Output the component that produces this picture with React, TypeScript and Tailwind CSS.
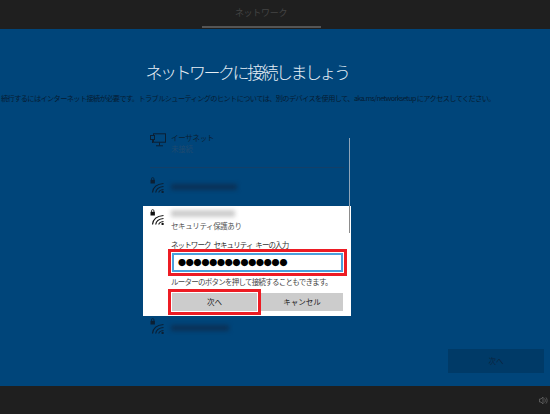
const jp = "font-['Noto_Sans_CJK_JP','Noto_Sans',sans-serif]";

function WifiIcon({ dark = false }: { dark?: boolean }) {
  const c = dark ? '#0b1f33' : '#111111';
  return (
    <svg width="16" height="16" viewBox="0 0 16 16" fill="none" className="shrink-0">
      <rect x="0.5" y="2.8" width="4.4" height="3.7" fill={c} />
      <path d="M1.5 3V1.8a1.2 1.2 0 0 1 2.4 0V3" stroke={c} strokeWidth="0.8" />
      <path d="M2.5 15.5C3 10.5 7 7 13.5 6.5" stroke={c} strokeWidth="1.2" />
      <path d="M5.7 15.5C6.1 12.4 8.6 10 13.5 9.5" stroke={c} strokeWidth="1.2" />
      <path d="M8.8 15.5C9 14 10.6 12.8 13.5 12.5" stroke={c} strokeWidth="1.2" />
      <circle cx="12.6" cy="14.9" r="1.2" fill={c} />
    </svg>
  );
}

function EthernetIcon() {
  return (
    <svg width="16" height="14" viewBox="0 0 16 14" fill="none" className="shrink-0">
      <rect x="3.5" y="0.8" width="12" height="8.4" stroke="#0b1f33" strokeWidth="1" />
      <rect x="0.5" y="2.5" width="4" height="4" fill="#00457a" stroke="#0b1f33" strokeWidth="1" />
      <path d="M2.5 6.5V10M9.5 9.5V12.5M6 12.8H13" stroke="#0b1f33" strokeWidth="1" />
    </svg>
  );
}

export default function App() {
  return (
    <div className={`${jp} flex h-[414px] w-[550px] flex-col overflow-hidden bg-[#00457a]`}>
      <header className="flex h-[29px] shrink-0 flex-col items-center bg-[#1f1f1f] pr-[28px]">
        <div className="flex h-[28px] w-[119px] items-center justify-center border-b-2 border-[#555555] text-[9px] tracking-[-0.3px] text-[#444444]">
          ネットワーク
        </div>
      </header>

      <main className="flex flex-1 flex-col items-center pr-[56px]">
        <h1 className="mt-[30px] h-[26px] text-[17px] font-light leading-[26px] tracking-[-2.5px] text-[#e6eef5]">
          ネットワークに接続しましょう
        </h1>
        <p className="mt-[7px] w-[550px] self-start whitespace-nowrap pl-[1px] text-[7.2px] leading-[12px] tracking-[-0.61px] text-[#061c32]">
          続行するにはインターネット接続が必要です。トラブルシューティングのヒントについては、別のデバイスを使用して、aka.ms/networksetup にアクセスしてください。
        </p>

        <div className="relative mt-[26px] w-[208px]">
          <div className="absolute right-[1px] top-[8px] h-[95px] w-[1px] bg-[#8fa5b8]" />
          <div className="flex h-[37px] gap-[5px] px-[7px] pt-[2px]">
            <div className="pt-[1px]"><EthernetIcon /></div>
            <div className="text-[7.5px] leading-[11px] tracking-[-0.3px] text-[#0b1f33]">
              <div>イーサネット</div>
              <div className="text-[#1f4a70]">未接続</div>
            </div>
          </div>
          <div className="mx-[7px] h-[1px] bg-[#123f68]" />
          <div className="flex h-[38px] items-start gap-[5px] px-[7px] pt-[9px]">
            <WifiIcon dark />
            <div className="mt-[7px] h-[6px] w-[66px] bg-[#0a3157] blur-[2px]" />
          </div>

          <div className="relative bg-white px-[7px]">
            <div className="absolute right-[1px] top-0 h-[27px] w-[1px] bg-[#8c8c8c]" />
            <div className="flex gap-[5px] pt-[3px]">
              <WifiIcon />
              <div>
                <div className="mt-[1px] h-[7px] w-[64px] bg-[#cccccc] blur-[2px]" />
                <div className="mt-[3px] text-[7.5px] leading-[11px] tracking-[-0.4px] text-[#555555]">
                  セキュリティ保護あり
                </div>
              </div>
            </div>
            <div className="ml-[21px] mt-[8px] whitespace-nowrap text-[7.5px] leading-[11px] tracking-[-0.9px] text-[#333333] [word-spacing:2px]">
              ネットワーク セキュリティ キーの入力
            </div>
            <div className="ml-[22px] mt-[3px] flex h-[19px] w-[171px] items-center border-2 border-[#4aa0dc] bg-white pl-[4px] text-[8px] leading-none tracking-[-0.2px] text-black outline-[3px] outline-offset-1 outline-[#ed1c24]">
              ●●●●●●●●●●●●●●
            </div>
            <div className="ml-[21px] mt-[4px] whitespace-nowrap text-[7.5px] leading-[11px] tracking-[-0.75px] text-[#444444]">
              ルーターのボタンを押して接続することもできます。
            </div>
            <div className="ml-[22px] mt-[6px] flex gap-[4px] pb-[5px]">
              <button className="h-[18px] w-[85px] bg-[#cccccc] text-[7.5px] text-[#222222] outline-[3px] outline-offset-1 outline-[#ed1c24]">
                次へ
              </button>
              <button className="h-[18px] w-[82px] bg-[#cccccc] text-[7.5px] text-[#222222]">
                キャンセル
              </button>
            </div>
          </div>

          <div className="flex h-[28px] items-start gap-[5px] px-[7px] pt-[2px]">
            <WifiIcon dark />
            <div className="mt-[7px] h-[6px] w-[58px] bg-[#0a3157] blur-[2px]" />
          </div>
        </div>

        <div className="mt-[5px] flex w-[550px] justify-end self-start pr-[6px]">
          <div className="flex h-[24px] w-[96px] items-center justify-center bg-[#003a67] text-[7.5px] text-[#0a2440]">
            次へ
          </div>
        </div>
      </main>

      <footer className="flex h-[28px] shrink-0 items-center justify-end overflow-hidden bg-[#1f1f1f] pr-[2px]">
        <svg width="9" height="9" viewBox="0 0 9 9" fill="none">
          <path d="M0.5 3H2L4 1V8L2 6H0.5Z" stroke="#666666" strokeWidth="0.8" />
          <path d="M5.5 2.5C6.5 3.5 6.5 5.5 5.5 6.5M7 1.5C8.5 3 8.5 6 7 7.5" stroke="#666666" strokeWidth="0.8" />
        </svg>
      </footer>
    </div>
  );
}
